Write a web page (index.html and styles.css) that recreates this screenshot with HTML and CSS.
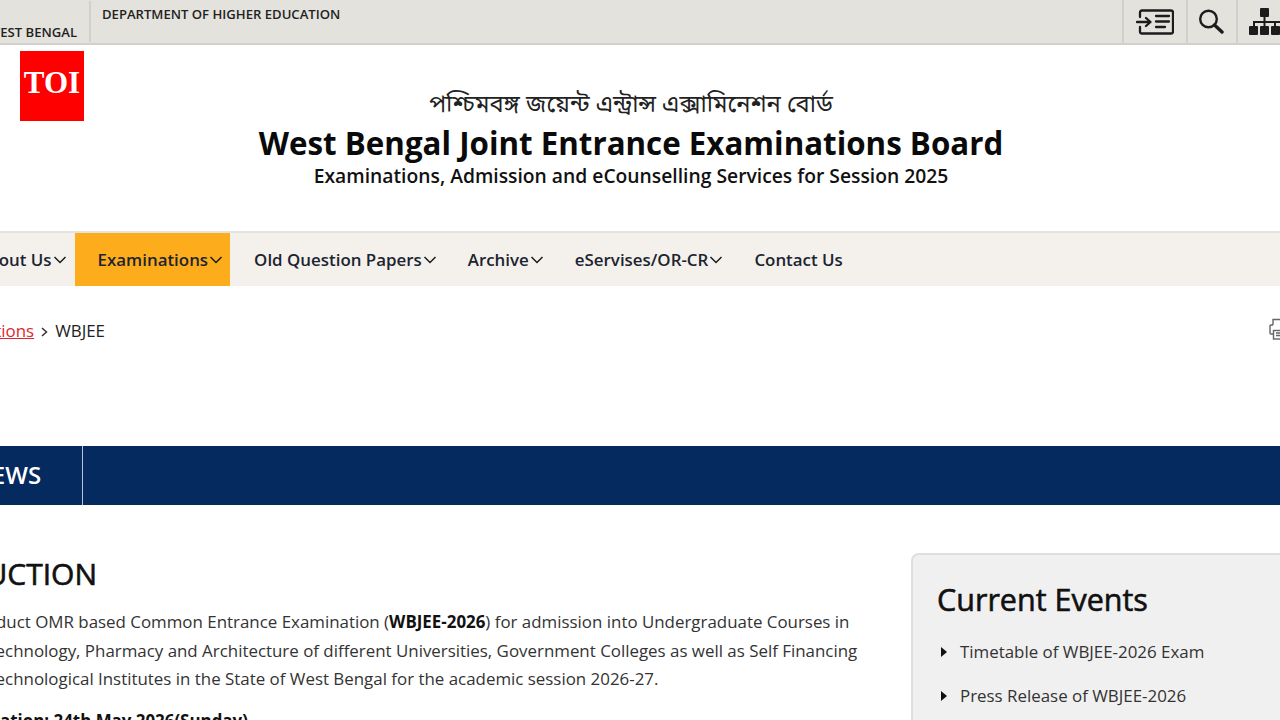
FILE: index.html
```html
<!DOCTYPE html>
<html lang="en">
<head>
<meta charset="utf-8">
<title>WBJEEB</title>
<link rel="stylesheet" href="styles.css">
</head>
<body>
<div class="page">
  <div class="topbar">
    <div class="gov"><span class="gov-text">GOVERNMENT OF WEST BENGAL</span></div>
    <div class="dept">DEPARTMENT OF HIGHER EDUCATION</div>
    <div class="tools">
      <div class="tool tool-skip">
        <svg width="38" height="26" viewBox="0 0 38 26" fill="none" stroke="#1c1c1c" stroke-width="2.300" stroke-linecap="round" stroke-linejoin="round"><path d="M4 8V3.500Q4 1.500 6 1.500H35Q37 1.500 37 3.500V22.500Q37 24.500 35 24.500H6Q4 24.500 4 22.500V18"/><path d="M1 13H14M10 9l4.500 4-4.500 4"/><path d="M20 7H33M20 12.500H33M20 18H29"/></svg>
      </div>
      <div class="tool tool-search">
        <svg width="26" height="25" viewBox="0 0 26 25" fill="none" stroke="#1c1c1c"><circle cx="10.500" cy="10" r="8.300" stroke-width="2.400"/><path d="M16.500 16l7.500 7" stroke-width="3.400" stroke-linecap="round"/></svg>
      </div>
      <div class="tool tool-map">
        <svg width="36" height="28" viewBox="0 0 36 28" fill="#1c1c1c"><rect x="11" y="0" width="9" height="9" rx="1"/><rect x="14.500" y="8" width="2" height="6"/><rect x="4" y="13" width="28" height="2"/><rect x="4" y="13" width="2" height="6"/><rect x="14.500" y="13" width="2" height="6"/><rect x="25" y="13" width="2" height="6"/><rect x="0" y="18" width="9" height="9" rx="1"/><rect x="11" y="18" width="9" height="9" rx="1"/><rect x="22" y="18" width="9" height="9" rx="1"/></svg>
      </div>
    </div>
  </div>

  <header class="masthead">
    <div class="logo">TOI</div>
    <p class="bn">পশ্চিমবঙ্গ জয়েন্ট এন্ট্রান্স এক্সামিনেশন বোর্ড</p>
    <h1 class="title">West Bengal Joint Entrance Examinations Board</h1>
    <p class="subtitle">Examinations, Admission and eCounselling Services for Session 2025</p>
  </header>

  <nav class="nav">
    <a class="nav-item">About Us<svg class="chev" width="14" height="8" viewBox="0 0 14 8" fill="none" stroke="#1a1a1a" stroke-width="1.500"><path d="M1.500 1l5.500 5.500L12.500 1"/></svg></a>
    <a class="nav-item active">Examinations<svg class="chev" width="14" height="8" viewBox="0 0 14 8" fill="none" stroke="#1a1a1a" stroke-width="1.500"><path d="M1.500 1l5.500 5.500L12.500 1"/></svg></a>
    <a class="nav-item">Old Question Papers<svg class="chev" width="14" height="8" viewBox="0 0 14 8" fill="none" stroke="#1a1a1a" stroke-width="1.500"><path d="M1.500 1l5.500 5.500L12.500 1"/></svg></a>
    <a class="nav-item">Archive<svg class="chev" width="14" height="8" viewBox="0 0 14 8" fill="none" stroke="#1a1a1a" stroke-width="1.500"><path d="M1.500 1l5.500 5.500L12.500 1"/></svg></a>
    <a class="nav-item">eServises/OR-CR<svg class="chev" width="14" height="8" viewBox="0 0 14 8" fill="none" stroke="#1a1a1a" stroke-width="1.500"><path d="M1.500 1l5.500 5.500L12.500 1"/></svg></a>
    <a class="nav-item">Contact Us</a>
  </nav>

  <div class="crumbs">
    <div class="crumb-trail">
      <a class="crumb-link">Examinations</a>
      <svg class="crumb-sep" width="7" height="10" viewBox="0 0 7 10" fill="none" stroke="#333" stroke-width="1.500"><path d="M1 1l4.500 4L1 9"/></svg>
      <span>WBJEE</span>
    </div>
    <svg class="print" width="18" height="22" viewBox="0 0 18 22" fill="none" stroke="#666" stroke-width="1.400"><path d="M4 7V1.500H17M4 7H2Q1 7 1 8V15Q1 16 2 16H4"/><rect x="4.500" y="12.500" width="13" height="8.500"/><path d="M7 15H17M7 17.500H17"/></svg>
  </div>

  <div class="band"><div class="band-tab">NEWS</div></div>

  <div class="content">
    <main class="main">
      <h2 class="intro">INTRODUCTION</h2>
      <p class="para">WBJEEB will conduct OMR based Common Entrance Examination (<b>WBJEE-2026</b>) for admission into Undergraduate Courses in Engineering &amp; Technology, Pharmacy and Architecture of different Universities, Government Colleges as well as Self Financing Engineering &amp; Technological Institutes in the State of West Bengal for the academic session 2026-27.</p>
      <p class="para date"><b>Date of Examination: 24th May 2026(Sunday)</b></p>
    </main>
    <aside class="events">
      <h3 class="events-title">Current Events</h3>
      <ul class="events-list">
        <li>Timetable of WBJEE-2026 Exam</li>
        <li>Press Release of WBJEE-2026</li>
      </ul>
    </aside>
  </div>
</div>
</body>
</html>
```
FILE: styles.css
```css
html, body { margin: 0; padding: 0; height: 720px; overflow: hidden; background: #fff; }
body { font-family: "Open Sans", "Noto Sans", sans-serif; color: #222; }
p, h1, h2, h3, ul { margin: 0; padding: 0; }

.page { position: relative; width: 1310px; margin-left: -24px; }

.topbar { display: flex; height: 43px; background: #e4e2dc; border-bottom: 2px solid #d2d0cb; }
.gov { width: 113px; height: 41px; margin-top: 1px; display: flex; justify-content: flex-end; align-items: flex-end; border-right: 2px solid #d2d0cb; overflow: hidden; flex: none; }
.gov-text { font-size: 13.100px; font-weight: 600; white-space: nowrap; color: #222; padding-right: 12px; padding-bottom: 1px; }
.dept { margin-left: 11px; padding-top: 5px; font-size: 13.100px; font-weight: 600; white-space: nowrap; color: #222; }
.tools { margin-left: auto; display: flex; height: 43px; }
.tool { display: flex; align-items: center; justify-content: center; border-left: 2px solid #d2d0cb; box-sizing: border-box; }
.tool-skip { width: 64px; }
.tool-search { width: 50px; padding-right: 2px; }
.tool-map { width: 50px; justify-content: flex-start; padding-left: 11px; }

.masthead { height: 186px; box-sizing: border-box; padding-top: 42px; text-align: center; }
.logo { position: absolute; left: 44px; top: 51px; width: 64px; height: 70px; background: #f00; color: #fff; font-family: "Liberation Serif", serif; font-weight: 700; font-size: 31px; line-height: 64px; text-align: center; }
.bn { font-family: "Noto Sans", "Noto Sans Bengali", "Lohit Bengali", sans-serif; font-size: 23.700px; line-height: 32px; color: #222; }
.title { margin-top: 2px; font-size: 31.300px; line-height: 44px; font-weight: 700; color: #0a0a0a; }
.subtitle { margin-top: -3px; font-size: 19.300px; line-height: 28px; font-weight: 600; color: #111; }

.nav { display: flex; height: 55px; box-sizing: border-box; margin-left: -22px; width: 1332px; background: #f4f1ed; border-top: 2px solid #e2e2e0; }
.nav-item { display: flex; align-items: center; padding: 0 8px 0 23px; font-size: 16.900px; font-weight: 600; color: #1c2430; white-space: nowrap; }
.nav-item.active { background: #fdad1c; padding-right: 7px; }
.nav-item.active + .nav-item { padding-left: 24px; }
.chev { margin-left: 1px; }

.crumbs { display: flex; justify-content: space-between; height: 160px; box-sizing: border-box; padding-top: 33px; font-size: 16.900px; line-height: 24px; color: #222; }
.crumb-trail { display: flex; align-items: center; height: 24px; margin-left: -48px; gap: 7px; }
.crumb-link { color: #dc2830; text-decoration: underline; }
.crumb-sep { margin-top: 2px; }
.print { margin-right: -1px; margin-top: -1px; }

.band { height: 59px; background: #042a60; }
.band-tab { display: inline-block; height: 59px; box-sizing: border-box; padding: 0 41px; border-right: 1px solid #b9c2d2; line-height: 58px; font-size: 24px; font-weight: 600; color: #fff; margin-left: -44px; }

.content { display: flex; }
.main { flex: none; width: 992px; margin-left: -104px; }
.intro { font-size: 30px; line-height: 40px; font-weight: 400; -webkit-text-stroke: 0.6px #111; color: #111; margin-top: 49px; text-align: right; width: 225px; white-space: nowrap; }
.para { font-size: 16.900px; line-height: 28.500px; color: #333; margin-top: 14px; }
.para b { color: #111; }
.date { margin-top: 13px; }
.events { flex: none; box-sizing: border-box; width: 400px; height: 300px; margin-left: 47px; margin-top: 48px; background: #f0f0f0; border: 2px solid #dedede; border-radius: 8px; padding: 22px 24px; }
.events-title { font-size: 30.500px; line-height: 44px; font-weight: 400; -webkit-text-stroke: 0.6px #111; color: #111; }
.events-list { list-style: none; margin-top: 9px; }
.events-list li { position: relative; padding-left: 23px; font-size: 16.900px; line-height: 44px; color: #333; }
.events-list li::before { content: ""; position: absolute; left: 4px; top: 17px; border-left: 6px solid #111; border-top: 5px solid transparent; border-bottom: 5px solid transparent; }
```
